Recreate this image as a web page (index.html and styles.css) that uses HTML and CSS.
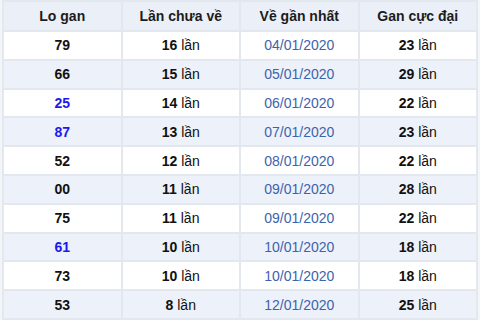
FILE: index.html
```html
<!DOCTYPE html>
<html>
<head>
<meta charset="utf-8">
<link rel="stylesheet" href="styles.css">
</head>
<body>
<table class="gan">
<thead>
<tr><th>Lo gan</th><th>Lần chưa về</th><th>Về gần nhất</th><th>Gan cực đại</th></tr>
</thead>
<tbody>
<tr><td class="num">79</td><td><b>16</b> lần</td><td class="date">04/01/2020</td><td><b>23</b> lần</td></tr>
<tr><td class="num">66</td><td><b>15</b> lần</td><td class="date">05/01/2020</td><td><b>29</b> lần</td></tr>
<tr><td class="num hot">25</td><td><b>14</b> lần</td><td class="date">06/01/2020</td><td><b>22</b> lần</td></tr>
<tr><td class="num hot">87</td><td><b>13</b> lần</td><td class="date">07/01/2020</td><td><b>23</b> lần</td></tr>
<tr><td class="num">52</td><td><b>12</b> lần</td><td class="date">08/01/2020</td><td><b>22</b> lần</td></tr>
<tr><td class="num">00</td><td><b>11</b> lần</td><td class="date">09/01/2020</td><td><b>28</b> lần</td></tr>
<tr><td class="num">75</td><td><b>11</b> lần</td><td class="date">09/01/2020</td><td><b>22</b> lần</td></tr>
<tr><td class="num hot">61</td><td><b>10</b> lần</td><td class="date">10/01/2020</td><td><b>18</b> lần</td></tr>
<tr><td class="num">73</td><td><b>10</b> lần</td><td class="date">10/01/2020</td><td><b>18</b> lần</td></tr>
<tr><td class="num">53</td><td><b>8</b> lần</td><td class="date">12/01/2020</td><td><b>25</b> lần</td></tr>
</tbody>
</table>
</body>
</html>
```
FILE: styles.css
```css
html, body {
  margin: 0;
  padding: 0;
  background: #f3f5f9;
}
body {
  padding: 0 2px 2px 2px;
  font-family: "Liberation Sans", Arial, sans-serif;
  font-size: 14px;
  color: #111;
}
.gan {
  width: 476px;
  border-collapse: collapse;
  table-layout: fixed;
  background: #fff;
}
.gan th, .gan td {
  border: 2px solid #e3e7ee;
  text-align: center;
  padding: 0;
}
.gan th {
  height: 28px;
  background: #eaeff8;
  font-weight: bold;
  color: #1c1c1c;
}
.gan td {
  height: 26.8px;
}
.gan tbody tr:nth-child(even) td {
  background: #edf1fa;
}
.gan td b {
  font-weight: bold;
}
.num {
  font-weight: bold;
}
.hot {
  color: #1a1aee;
}
.date {
  color: #3d63ad;
}
```
